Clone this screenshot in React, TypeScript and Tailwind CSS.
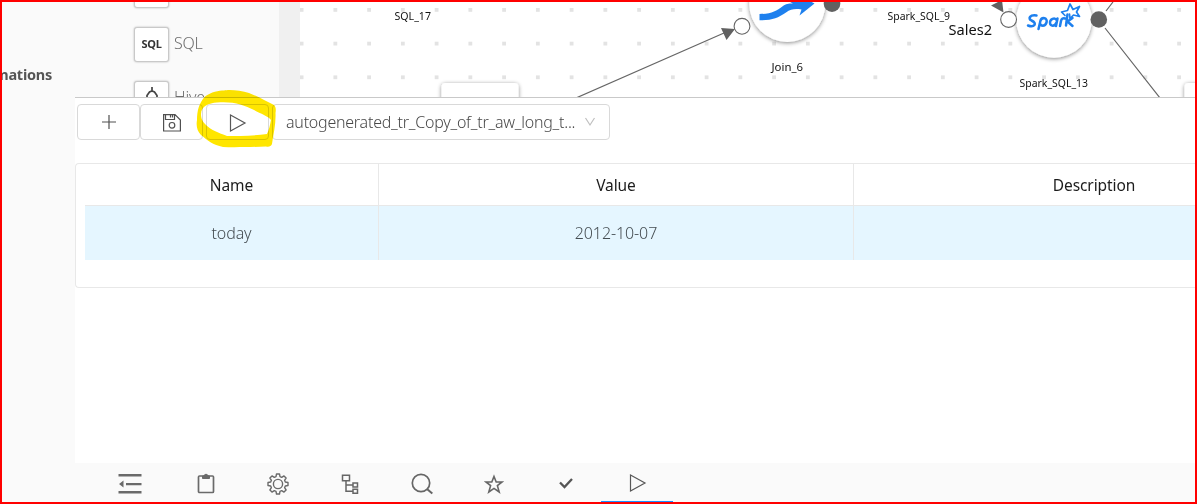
import type { ReactNode } from "react";

const DOT_COLUMNS = Array.from({ length: 27 }, (_, i) => 301.7 + i * 33.75);
const DOT_ROWS = [10, 43.7, 77.4];

function PlayIcon() {
  return (
    <svg width="18" height="20" viewBox="0 0 18 20" fill="none" stroke="#585858" strokeWidth="1.2">
      <path d="M1.5 2 L16 10 L1.5 18 Z" />
    </svg>
  );
}

function PaletteTile({ children }: { children?: ReactNode }) {
  return (
    <div className="flex h-[35px] w-[35px] shrink-0 items-center justify-center rounded-[3px] border border-[#c9c9c9] bg-white shadow-[0_0_2px_rgba(0,0,0,0.3)]">
      {children}
    </div>
  );
}

function Palette() {
  return (
    <div className="flex h-[95px] w-[204px] shrink-0 flex-col gap-[19px] overflow-hidden pl-[59px]">
      <div className="-mt-[29px] flex">
        <PaletteTile />
      </div>
      <div className="flex items-center gap-[5px]">
        <PaletteTile>
          <span className="text-[11px] font-bold tracking-[-0.3px] text-[#333]">SQL</span>
        </PaletteTile>
        <span className="pb-1 text-[16px] leading-5 font-light tracking-[-0.2px] text-[#6e6e6e]">SQL</span>
      </div>
      <div className="flex items-center gap-[5px]">
        <PaletteTile>
          <svg width="16" height="24" viewBox="0 0 16 24" fill="none" stroke="#444" strokeWidth="1.7">
            <path d="M8 0 V4 M3 15 V8.5 L5.5 5 L8 4 L10.500 5 L13 8.500 V15 M1 12 H3 M13 12 H15" />
          </svg>
        </PaletteTile>
        <span className="pb-1 text-[16px] leading-5 font-light tracking-[-0.2px] text-[#6e6e6e]">Hive</span>
      </div>
    </div>
  );
}

function Diagram() {
  return (
    <svg className="shrink-0" width="895" height="95" viewBox="300 2 895 95" fontFamily="'Noto Sans', sans-serif">
      <defs>
        <filter id="soft" x="-20%" y="-20%" width="140%" height="150%">
          <feDropShadow dx="0" dy="1" stdDeviation="2.2" floodColor="#000" floodOpacity="0.48" />
        </filter>
      </defs>
      <rect x="300" y="2" width="895" height="95" fill="#fff" />
      {DOT_ROWS.map((y) =>
        DOT_COLUMNS.map((x) => <rect key={`${x}-${y}`} x={x - 2} y={y - 2} width="3.8" height="3.8" fill="#e3e3e3" />),
      )}
      <g fill="none" stroke="#666" strokeWidth="1.2">
        <path d="M576 98 L724 33 M1105 28 L1160 98 M1106 11 L1113 2" />
      </g>
      <path d="M721 28 L735 29 L726.500 40 Z M991 5.500 L1003.500 12.500 L1002 0 Z" fill="#616161" />
      <rect x="441.500" y="83" width="77" height="40" rx="4" fill="#fff" filter="url(#soft)" />
      <rect x="1184.500" y="83" width="77" height="40" rx="4" fill="#fff" filter="url(#soft)" />
      <circle cx="787.300" cy="4" r="38" fill="#fff" filter="url(#soft)" />
      <circle cx="1054" cy="20" r="37.700" fill="#fff" filter="url(#soft)" />
      <circle cx="742" cy="26.300" r="7.900" fill="#fff" stroke="#666" strokeWidth="1.100" />
      <circle cx="1008.600" cy="19.500" r="7.900" fill="#fff" stroke="#666" strokeWidth="1.100" />
      <circle cx="832" cy="3.700" r="8.300" fill="#616161" />
      <circle cx="1098.800" cy="19.500" r="8.300" fill="#616161" />
      <path
        d="M759.500 14 C772 14 776 11 783 6 C786 4 788 3.500 793 3.500 L786 0 H808 L814.500 3.500 L799.500 15.500 L801.500 9.500 C795 8.500 791 9 786 12.500 C778 18 772 20.300 759.500 20.300 Z"
        fill="#1e80ee"
      />
      <g fill="none" stroke="#1e80ee" strokeLinecap="round" strokeLinejoin="round">
        <path
          strokeWidth="2.500"
          d="M1036.500 15.500 C1030 14.500 1027.500 18.500 1031.500 20.500 C1038 23.500 1034 28 1028 25.500 M1038.500 29 L1040.500 20.500 C1042 16.500 1048 18 1046.500 22.500 C1045 27 1040.500 26 1040 23.500 M1057.500 18.500 L1056 26 M1057 20.500 C1054.500 16.500 1050 19.500 1050 22.500 C1050 27 1055 26.500 1056.500 22.500 M1060 26 L1061 21 C1061.500 18.500 1063 18 1065 18.500 M1067.500 14.500 L1066 25.500 M1072.500 18 L1067.500 21.500 L1072.500 26"
        />
        <path
          strokeWidth="1.700"
          d="M1065 15.500 L1061.500 12 L1067.500 10.500 L1070 4 L1073 9.500 L1079.500 6.500 L1076.500 12 L1079.500 16.500 L1073.500 15 L1070 18.500 L1069.500 14"
        />
      </g>
      <g fill="#111" fontSize="11">
        <text x="394.500" y="20" textLength="36.500" lengthAdjust="spacingAndGlyphs">SQL_17</text>
        <text x="771.500" y="71" textLength="31.500" lengthAdjust="spacingAndGlyphs">Join_6</text>
        <text x="887.500" y="20" textLength="62.500" lengthAdjust="spacingAndGlyphs">Spark_SQL_9</text>
        <text x="1019.500" y="87" textLength="68.500" lengthAdjust="spacingAndGlyphs">Spark_SQL_13</text>
        <text x="948.500" y="35" fontSize="15" textLength="43.500" lengthAdjust="spacingAndGlyphs">Sales2</text>
      </g>
    </svg>
  );
}

function Toolbar() {
  return (
    <div className="flex h-[49px] pl-[2px] pt-[6px]">
      <button className="flex h-9 w-[63px] items-center justify-center rounded border border-[#d9d9d9]">
        <svg width="16" height="16" viewBox="0 0 16 16" stroke="#505050" strokeWidth="1.200">
          <path d="M8 1 V15 M1 8 H15" />
        </svg>
      </button>
      <button className="flex h-9 w-[63px] items-center justify-center rounded border border-[#d9d9d9] pt-px">
        <svg width="20" height="20" viewBox="0 0 20 20" fill="none" stroke="#505050" strokeWidth="1.200">
          <path d="M1.600 1.600 H13 L18.400 7 V18 H1.600 Z M3.500 2 V6.500 H12.500 V2 M8.500 2 V4.500 M10.500 2 V4.500" />
          <circle cx="10" cy="12.300" r="2.800" />
        </svg>
      </button>
      <button className="ml-[3px] flex h-9 w-[63px] items-center justify-center rounded border border-[#d9d9d9] pt-px">
        <PlayIcon />
      </button>
      <div className="ml-[3px] flex h-9 w-[338px] items-center justify-between rounded border border-[#d9d9d9] px-[13px]">
        <span className="whitespace-nowrap text-[16px] font-light tracking-[-0.24px] text-[#484848]">
          autogenerated_tr_Copy_of_tr_aw_long_t...
        </span>
        <svg width="12" height="10" viewBox="0 0 12 10" fill="none" stroke="#bfbfbf" strokeWidth="1.200">
          <path d="M1.500 1 L6 8 L10.500 1" />
        </svg>
      </div>
    </div>
  );
}

function VariablesTable() {
  return (
    <div className="mt-4 h-[125px] overflow-hidden rounded-l border border-r-0 border-[#e8e8e8] pl-[9px]">
      <div className="grid w-[1249px] grid-cols-[294px_475px_480px] text-center text-[16px]">
        <div className="h-[42px] border-r border-b border-[#e8e8e8] text-[15.500px] leading-[42px] tracking-[-0.1px] text-[#1c1c1c]">
          Name
        </div>
        <div className="h-[42px] border-r border-b border-[#e8e8e8] text-[15.500px] leading-[42px] tracking-[-0.1px] text-[#1c1c1c]">
          Value
        </div>
        <div className="h-[42px] border-b border-[#e8e8e8] text-[15.500px] leading-[42px] tracking-[-0.1px] text-[#1c1c1c]">
          Description
        </div>
        <div className="h-[54px] border-r border-[#e8e8e8] bg-[#e5f6ff] leading-[54px] font-light tracking-[-0.1px] text-[#454d52]">
          today
        </div>
        <div className="h-[54px] border-r border-[#e8e8e8] bg-[#e5f6ff] leading-[54px] font-light tracking-[-0.1px] text-[#454d52]">
          2012-10-07
        </div>
        <div className="h-[54px] bg-[#e5f6ff]" />
      </div>
    </div>
  );
}

function Tab({ active, children }: { active?: boolean; children: ReactNode }) {
  return (
    <div
      className={
        active
          ? "flex h-[39px] w-[72px] items-center justify-center border-b border-[#1890ff] pt-[2px] pl-[2px]"
          : "flex h-[39px] w-[72px] items-center justify-center pt-[2px] pl-[2px]"
      }
    >
      {children}
    </div>
  );
}

function BottomTabs() {
  return (
    <div className="flex h-[39px] bg-[#fafafa] pl-[18px]">
      <Tab>
        <svg width="24" height="22" viewBox="0 0 24 22" fill="#6a6a6a">
          <path d="M0.500 1 H23.500 V3.500 H0.500 Z M8 10 H23.500 V12.300 H8 Z M0.500 18 H23.500 V20.500 H0.500 Z M1 11 L5.500 7.500 V14.500 Z" />
        </svg>
      </Tab>
      <div className="flex pl-1">
        <Tab>
          <svg width="20" height="22" viewBox="0 0 20 22" fill="none" stroke="#6a6a6a" strokeWidth="1.700">
            <rect x="2.500" y="3" width="15" height="16.500" rx="1" />
            <path d="M6.500 3 H8 C8 0.800 12 0.800 12 3 H13.500 V5.500 H6.500 Z" fill="#6a6a6a" strokeWidth="1" />
          </svg>
        </Tab>
        <Tab>
          <svg width="22" height="22" viewBox="0 0 22 22" fill="none" stroke="#6a6a6a" strokeWidth="1.400" strokeLinejoin="round">
            <path d="M9.500 1 H12.500 L13 3.700 L14.700 4.400 L17 2.900 L19.100 5 L17.600 7.300 L18.300 9 L21 9.500 V12.500 L18.300 13 L17.600 14.700 L19.100 17 L17 19.100 L14.700 17.600 L13 18.300 L12.500 21 H9.500 L9 18.300 L7.300 17.600 L5 19.100 L2.900 17 L4.400 14.700 L3.700 13 L1 12.500 V9.500 L3.700 9 L4.400 7.300 L2.900 5 L5 2.900 L7.300 4.400 L9 3.700 Z" />
            <circle cx="11" cy="11" r="4.600" />
          </svg>
        </Tab>
        <Tab>
          <svg width="18" height="20" viewBox="0 0 18 20" fill="none" stroke="#666" strokeWidth="1.500">
            <path d="M1.500 1.200 H8.500 V6.700 H1.500 Z M5 6.700 V17.300 H12 M5 11 H12 M12 9 H16.500 V13 H12 Z M12 15.200 H16.500 V19.200 H12 Z" />
          </svg>
        </Tab>
        <Tab>
          <svg width="22" height="22" viewBox="0 0 22 22" fill="none" stroke="#666" strokeWidth="1.700">
            <circle cx="10" cy="10" r="8.700" />
            <path d="M16 16 L21.300 20.500" strokeWidth="2" />
          </svg>
        </Tab>
        <Tab>
          <svg width="20" height="20" viewBox="0 0 20 20" fill="none" stroke="#666" strokeWidth="1.600">
            <path d="M10 2.500 L12.200 8 H18 L13.400 11.600 L15.200 18 L10 14.400 L4.800 18 L6.600 11.600 L2 8 H7.800 Z" />
          </svg>
        </Tab>
        <Tab>
          <svg width="16" height="16" viewBox="0 0 16 16" fill="none" stroke="#555" strokeWidth="2.300">
            <path d="M2 6.500 L6.500 11 L14 3" />
          </svg>
        </Tab>
        <Tab active>
          <PlayIcon />
        </Tab>
      </div>
    </div>
  );
}

export default function App() {
  return (
    <div className="relative flex h-[504px] w-[1197px] overflow-hidden border-2 border-[#ff0000] bg-white font-['Noto_Sans',sans-serif]">
      <aside className="flex w-[73px] shrink-0 justify-end overflow-hidden bg-[#fafafa] pt-[62px] pr-[23px]">
        <span className="text-[14.500px] font-bold tracking-[-0.250px] text-[#555]">Transformations</span>
      </aside>
      <main className="flex w-[1120px] shrink-0 flex-col">
        <div className="flex h-24 w-[1120px] overflow-hidden border-b border-[#c9c9c9] bg-[#fafafa]">
          <Palette />
          <div className="w-[21px] shrink-0 bg-[#f0f0f0]" />
          <Diagram />
        </div>
        <section className="h-[365px]">
          <Toolbar />
          <VariablesTable />
        </section>
        <BottomTabs />
      </main>
      <svg
        className="pointer-events-none absolute top-[86px] left-[192px] mix-blend-multiply"
        width="84"
        height="64"
        viewBox="194 88 84 64"
      >
        <path
          fillRule="evenodd"
          fill="#ffe600"
          d="M205 96.500 C211 92 219 90.500 224 90.500 C229 89 241 90.500 249 93 C257 96 266 101 274 105 C276 107 276 110 275.500 113 C276 124 273.500 133 272 144 C271 146.500 269 147 266 146.500 C251 147 235 147.500 223 147 C213 145 207 140 201 135 C197 131 196 126 197 120 C197 111 199 103 205 96.500 Z M201 114 C201 106 209 103 217 102.500 C233 101 244 105 254 110 C261 114 268 116 271 120 C270 125 269 130 267 134 C254 136 238 136 227 136 C219 133 211 130 206 125 C202 121 201 118 201 114 Z"
        />
      </svg>
    </div>
  );
}
